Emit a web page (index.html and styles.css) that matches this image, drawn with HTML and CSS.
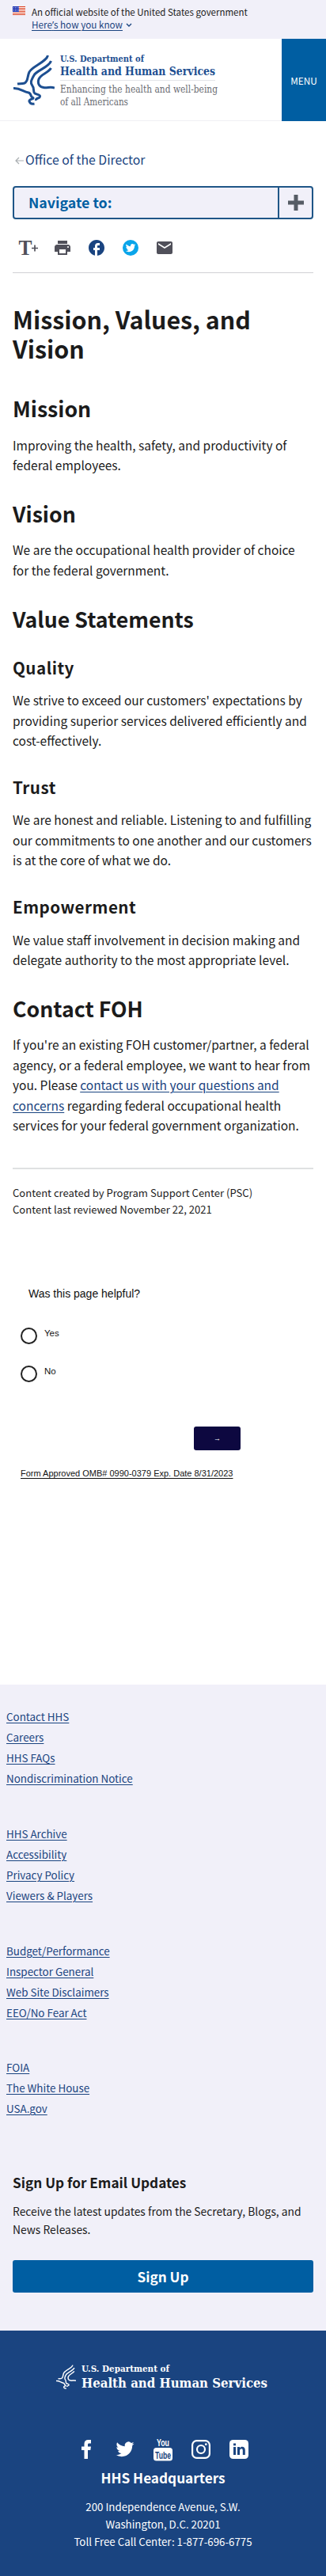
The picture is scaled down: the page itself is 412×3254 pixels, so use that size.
FILE: index.html
```html
<!DOCTYPE html>
<html lang="en">
<head>
<meta charset="utf-8">
<title>Mission, Values, and Vision</title>
<link rel="stylesheet" href="styles.css">
</head>
<body>
<svg width="0" height="0" class="defs" aria-hidden="true">
  <symbol id="eagle" viewBox="0 0 52 64">
    <g fill="none" stroke="currentColor" stroke-width="3" stroke-linejoin="round">
      <path d="M43.500 1C42 9 23 15 20 22C17 28 19 34 14 36C11 37 8 36.500 5 37"/>
      <path d="M47.500 8C45 16 29 20 26 26C22 33 21 36 24 39.500C27 43 24 46 27 49C30 51 34 50 33.500 53C33 56 28 54 28.500 58"/>
      <path d="M47.500 17C44 23 34 25 32 31C30 37 33 41 38 41.500C43 42.500 46 40 52 42"/>
      <path d="M0 42.500C9 42 12 47 19 48C23 49 21 53 24 54C28 56 19 56 20 59C21 62 24 62.500 26.500 62"/>
    </g>
  </symbol>
</svg>

<section class="banner">
  <svg class="flag" viewBox="0 0 16 11"><rect width="16" height="11" fill="#fff"/><path d="M0 .5h16M0 2.500h16M0 4.500h16M0 6.500h16M0 8.500h16M0 10.500h16" stroke="#db3e1f"/><rect width="8" height="7" fill="#1e33b1"/><path d="M1 1.500h7M1 3.500h7M1 5.500h7" stroke="#fff" stroke-width=".7" stroke-dasharray="1 1"/></svg>
  <div>An official website of the United States government<br><a href="#">Here<span class="apos">’</span>s how you know</a><svg class="chev" viewBox="0 0 8 6"><path d="M1 1l3 3 3-3" fill="none" stroke="#1a4480" stroke-width="1.400"/></svg></div>
</section>

<header class="header">
  <div class="brand">
    <svg class="brand-mark"><use href="#eagle"/></svg>
    <svg class="brand-text" viewBox="0 0 202 72">
      <g class="serif-bold"><text x="0" y="12.500" font-size="11.300" textLength="106" lengthAdjust="spacingAndGlyphs">U.S. Department of</text>
      <text x="0" y="30" font-size="14.500" textLength="196" lengthAdjust="spacingAndGlyphs">Health and Human Services</text></g>
      <path d="M0 36.500h196" stroke="#e3e4e8"/>
      <g class="serif"><text x="0" y="52" font-size="12.300" textLength="199" lengthAdjust="spacingAndGlyphs">Enhancing the health and well-being</text>
      <text x="0" y="68" font-size="12.300" textLength="86" lengthAdjust="spacingAndGlyphs">of all Americans</text></g>
    </svg>
  </div>
  <button class="menu">MENU</button>
</header>

<main class="main">
  <nav class="crumb"><svg viewBox="0 0 11 10"><path d="M5 1L1 5l4 4M1 5h10" fill="none" stroke="#a9aeb1" stroke-width="1.200"/></svg><a href="#">Office of the Director</a></nav>
  <div class="navto"><span>Navigate to:</span><div class="plus"><svg viewBox="0 0 20 20"><path d="M10 0v20M0 10h20" stroke="#565c65" stroke-width="5"/></svg></div></div>
  <div class="tools">
    <svg class="tsize" viewBox="0 0 24 20"><text x="-.5" y="19" font-size="27" textLength="17" lengthAdjust="spacingAndGlyphs">T</text><path d="M20 6.500v8M16 10.500h8" stroke="#50505a" stroke-width="1.700"/></svg>
    <svg class="ic" viewBox="2 2 20 20"><path fill="#50505a" d="M19 8H5c-1.660 0-3 1.340-3 3v6h4v4h12v-4h4v-6c0-1.660-1.340-3-3-3zm-3 11H8v-5h8v5zm3-7c-.55 0-1-.45-1-1s.45-1 1-1 1 .45 1 1-.45 1-1 1zm-1-9H6v4h12V3z"/></svg>
    <svg class="ic" viewBox="2 2 20 20"><path fill="#1a4480" d="M22 12c0-5.520-4.480-10-10-10S2 6.480 2 12c0 4.840 3.440 8.870 8 9.800V15H8v-3h2V9.500C10 7.570 11.570 6 13.500 6H16v3h-2c-.55 0-1 .45-1 1v2h3v3h-3v6.950c5.050-.5 9-4.760 9-9.950z"/></svg>
    <svg class="ic" viewBox="0 0 20 20"><circle cx="10" cy="10" r="10" fill="#0aa5ea"/><path fill="#fff" transform="translate(3.800 3.900) scale(.52)" d="M23.953 4.570a10 10 0 0 1-2.825.775 4.958 4.958 0 0 0 2.163-2.723c-.951.555-2.005.959-3.127 1.184a4.920 4.920 0 0 0-8.384 4.482C7.690 8.095 4.067 6.130 1.640 3.162a4.822 4.822 0 0 0-.666 2.475c0 1.710.87 3.213 2.188 4.096a4.904 4.904 0 0 1-2.228-.616v.06a4.923 4.923 0 0 0 3.946 4.827 4.996 4.996 0 0 1-2.212.085 4.936 4.936 0 0 0 4.604 3.417 9.867 9.867 0 0 1-6.102 2.105c-.39 0-.779-.023-1.170-.067a13.995 13.995 0 0 0 7.557 2.209c9.053 0 13.998-7.496 13.998-13.985 0-.21 0-.42-.015-.63A9.935 9.935 0 0 0 24 4.590z"/></svg>
    <svg class="ic" viewBox="2 2 20 20"><path fill="#50505a" d="M20 4H4c-1.100 0-2 .9-2 2v12c0 1.100.9 2 2 2h16c1.100 0 2-.9 2-2V6c0-1.100-.9-2-2-2zm0 4l-8 5-8-5V6l8 5 8-5v2z"/></svg>
  </div>

  <article>
    <h1>Mission, Values, and<br>Vision</h1>
    <h2>Mission</h2>
    <p>Improving the health, safety, and productivity of<br>federal employees.</p>
    <h2>Vision</h2>
    <p>We are the occupational health provider of choice<br>for the federal government.</p>
    <h2>Value Statements</h2>
    <h3>Quality</h3>
    <p>We strive to exceed our customers' expectations by<br>providing superior services delivered efficiently and<br>cost-effectively.</p>
    <h3>Trust</h3>
    <p>We are honest and reliable. Listening to and fulfilling<br>our commitments to one another and our customers<br>is at the core of what we do.</p>
    <h3>Empowerment</h3>
    <p>We value staff involvement in decision making and<br>delegate authority to the most appropriate level.</p>
    <h2>Contact FOH</h2>
    <p>If you're an existing FOH customer/partner, a federal<br>agency, or a federal employee, we want to hear from<br>you. Please <a href="#">contact us with your questions and<br>concerns</a> regarding federal occupational health<br>services for your federal government organization.</p>
  </article>
  <div class="meta">Content created by Program Support Center (PSC)<br>Content last reviewed November 22, 2021</div>
</main>

<form class="survey">
  <div class="question">Was this page helpful?</div>
  <label class="choice"><span class="radio"></span>Yes</label>
  <label class="choice"><span class="radio"></span>No</label>
  <button type="button" class="next">→</button>
  <a href="#" class="omb">Form Approved OMB# 0990-0379 Exp. Date 8/31/2023</a>
</form>

<footer>
  <div class="links">
    <ul><li><a href="#">Contact HHS</a></li><li><a href="#">Careers</a></li><li><a href="#">HHS FAQs</a></li><li><a href="#">Nondiscrimination Notice</a></li></ul>
    <ul><li><a href="#">HHS Archive</a></li><li><a href="#">Accessibility</a></li><li><a href="#">Privacy Policy</a></li><li><a href="#">Viewers &amp; Players</a></li></ul>
    <ul><li><a href="#">Budget/Performance</a></li><li><a href="#">Inspector General</a></li><li><a href="#">Web Site Disclaimers</a></li><li><a href="#">EEO/No Fear Act</a></li></ul>
    <ul><li><a href="#">FOIA</a></li><li><a href="#">The White House</a></li><li><a href="#">USA.gov</a></li></ul>
  </div>
  <section class="signup">
    <h4>Sign Up for Email Updates</h4>
    <p>Receive the latest updates from the Secretary, Blogs, and<br>News Releases.</p>
    <button class="signup-btn">Sign Up</button>
  </section>
  <section class="hq">
    <div class="foot-brand">
      <svg class="foot-mark"><use href="#eagle"/></svg>
      <svg class="foot-text" viewBox="0 0 236 36"><g class="serif-bold"><text x="0" y="11.500" font-size="11.500" textLength="111" lengthAdjust="spacingAndGlyphs">U.S. Department of</text><text x="0" y="31.500" font-size="17" textLength="235" lengthAdjust="spacingAndGlyphs">Health and Human Services</text></g></svg>
    </div>
    <div class="social">
      <svg viewBox="0 0 24 30"><path fill="#fff" d="M8.500 27V16H5v-4.500h3.500V8c0-3.200 2-5 5-5H17v4.500h-2.500c-1 0-1.500.5-1.500 1.500v2.500h4L16.300 16H13v11z"/></svg>
      <svg viewBox="0 0 24 30"><path fill="#fff" transform="translate(.5 3.300) scale(.96)" d="M23.953 4.570a10 10 0 0 1-2.825.775 4.958 4.958 0 0 0 2.163-2.723c-.951.555-2.005.959-3.127 1.184a4.920 4.920 0 0 0-8.384 4.482C7.690 8.095 4.067 6.130 1.640 3.162a4.822 4.822 0 0 0-.666 2.475c0 1.710.87 3.213 2.188 4.096a4.904 4.904 0 0 1-2.228-.616v.06a4.923 4.923 0 0 0 3.946 4.827 4.996 4.996 0 0 1-2.212.085 4.936 4.936 0 0 0 4.604 3.417 9.867 9.867 0 0 1-6.102 2.105c-.39 0-.779-.023-1.170-.067a13.995 13.995 0 0 0 7.557 2.209c9.053 0 13.998-7.496 13.998-13.985 0-.21 0-.42-.015-.63A9.935 9.935 0 0 0 24 4.590z"/></svg>
      <svg class="yt" viewBox="0 0 24 30"><text x="4" y="10.500" fill="#fff" font-size="13.500" textLength="16" lengthAdjust="spacingAndGlyphs">You</text><rect y="13" width="24" height="16.500" rx="3.500" fill="#fff"/><text x="2" y="26.500" fill="#1a4480" font-size="13.500" textLength="20" lengthAdjust="spacingAndGlyphs">Tube</text></svg>
      <svg viewBox="0 0 24 30"><g fill="none" stroke="#fff" stroke-width="2.200"><rect x="1.100" y="4.100" width="21.800" height="21.800" rx="5.500"/><circle cx="12" cy="15" r="5"/></g><circle cx="18.300" cy="8.700" r="1.400" fill="#fff"/></svg>
      <svg viewBox="0 0 24 30"><rect y="3" width="24" height="24" rx="4.500" fill="#fff"/><path fill="#1a4480" d="M5 12h3v10H5zM5 7.500h3v2.700H5zM10 12h3v1.400c.7-1 1.700-1.700 3.100-1.700 2.500 0 3.700 1.600 3.700 4.300v6h-3v-5.500c0-1.400-.5-2.200-1.700-2.200-1.300 0-2.100.9-2.100 2.400V22h-3z"/></svg>
    </div>
    <h5>HHS Headquarters</h5>
    <address>200 Independence Avenue, S.W.<br>Washington, D.C. 20201<br>Toll Free Call Center: 1-877-696-6775</address>
  </section>
</footer>
</body>
</html>
```
FILE: styles.css
```css
* { box-sizing: border-box; margin: 0; padding: 0; }
body {
  width: 412px;
  background: #fff;
  color: #1b1b1b;
  font-family: "Noto Sans CJK SC", "Noto Sans", sans-serif;
  font-size: 15.5px;
  line-height: 25.44px;
  white-space: nowrap;
}
a { color: #1a4480; text-underline-offset: 2px; text-decoration-thickness: 1px; }
button { border: 0; font-family: inherit; color: #fff; background: #005ea2; }
svg { display: block; flex: none; overflow: visible; }
.defs { position: absolute; }

.banner { display: flex; gap: 8px; height: 49px; padding: 7px 16px 0; background: #f1f0f9; font-size: 11.5px; line-height: 16px; }
.banner a { font-size: 11.7px; }
.apos { font-family: "Noto Sans", sans-serif; line-height: 1; }
.flag { width: 16px; height: 11px; margin-top: 1px; }
.chev { display: inline-block; width: 8px; height: 6px; margin-left: 4px; vertical-align: 1px; }

.header { display: flex; justify-content: space-between; height: 104px; border-bottom: 1px solid #f0f0f4; }
.brand { display: flex; padding: 16px 0 0 17px; }
.brand-mark { width: 52px; height: 64px; margin-top: 4px; margin-right: 7px; color: #1d4f91; }
.brand-text { width: 202px; height: 72px; }
.serif-bold { font-family: "DejaVu Serif", serif; font-weight: bold; fill: #1d4f91; }
.serif { font-family: "DejaVu Serif", serif; font-weight: normal; fill: #6a6c72; }
.menu { width: 56px; height: 104px; font-size: 11.8px; }

.main { padding: 36px 16px 0; }
.crumb { display: flex; align-items: center; height: 25px; font-size: 15.8px; }
.crumb svg { width: 11px; height: 10px; margin: 2px 2px 0 3px; }
.crumb a { text-decoration: none; }
.navto { display: flex; height: 42px; margin-top: 21px; border: 2px solid #1f5687; border-radius: 4px; background: #f1f0f9; }
.navto span { flex: 1; padding-left: 18px; font-size: 17.8px; font-weight: bold; line-height: 37px; color: #005ea2; }
.plus { display: grid; place-items: center; width: 43px; border-left: 2px solid #1f5687; }
.plus svg { width: 20px; height: 20px; }
.tools { display: flex; align-items: center; height: 68px; padding: 5px 0 0 8px; border-bottom: 1px solid #d0d1d4; }
.tsize { width: 24px; height: 20px; margin-right: 21px; font-family: "Liberation Serif", serif; font-weight: bold; fill: #50505a; }
.ic { width: 20px; height: 20px; margin-right: 23px; }

h1 { margin-top: 40px; font-size: 30.4px; line-height: 37px; }
h2 { margin: 32.3px 0 17.6px; font-size: 26.7px; line-height: 32px; }
h1 + h2 { margin-top: 41px; }
h3 { margin: 33.5px 0 17.3px; font-size: 20.6px; line-height: 24px; letter-spacing: .5px; }
.meta { margin-top: 40px; padding-top: 19px; border-top: 2px solid #dfe1e2; font-size: 13.05px; line-height: 21px; }

.survey { display: flex; flex-direction: column; align-items: flex-start; height: 590.5px; padding: 86.5px 0 0 26px; font-family: "Liberation Sans", Arial, sans-serif; font-size: 11.5px; line-height: 20px; color: #111; }
.question { padding-left: 10px; font-size: 14px; }
.choice { display: flex; gap: 9px; height: 21px; margin-top: 33px; line-height: 15px; }
.choice + .choice { margin-top: 27px; }
.radio { width: 21px; height: 21px; border: 2px solid #222; border-radius: 50%; }
.next { width: 59px; height: 30px; margin: 56px 0 0 219px; border-radius: 3px; background: #0d0840; font-size: 9px; }
.omb { margin-top: 19px; font-size: 11px; color: #111; }

footer { background: #f1f0f9; }
.links { display: grid; gap: 43.7px; height: 615px; padding: 27.4px 8px 0; align-content: start; font-size: 13.4px; line-height: 26px; }
ul { list-style: none; }
.signup { height: 201px; padding: 0 16px; }
.signup h4 { font-size: 17.2px; line-height: 27px; }
.signup p { margin-top: 12px; font-size: 13.85px; line-height: 23px; }
.signup-btn { width: 380px; height: 41px; margin-top: 27px; border-radius: 3px; font-size: 17.2px; font-weight: bold; line-height: 39px; }
.hq { height: 310px; padding-top: 40px; background: #1a4480; color: #fff; text-align: center; }
.foot-brand { display: flex; padding-left: 71px; }
.foot-mark { width: 25px; height: 31px; margin: 3px 7px 0 0; }
.foot-text { width: 236px; height: 36px; }
.hq .serif-bold { fill: #fff; }
.social { display: flex; justify-content: center; gap: 24px; margin-top: 59px; }
.social svg { width: 24px; height: 30px; }
.yt { font-family: "Liberation Sans", Arial, sans-serif; font-weight: bold; }
h5 { margin-top: 8px; font-size: 17.2px; line-height: 26px; }
address { margin-top: 12.5px; font-size: 13.3px; font-style: normal; line-height: 22px; }
```
